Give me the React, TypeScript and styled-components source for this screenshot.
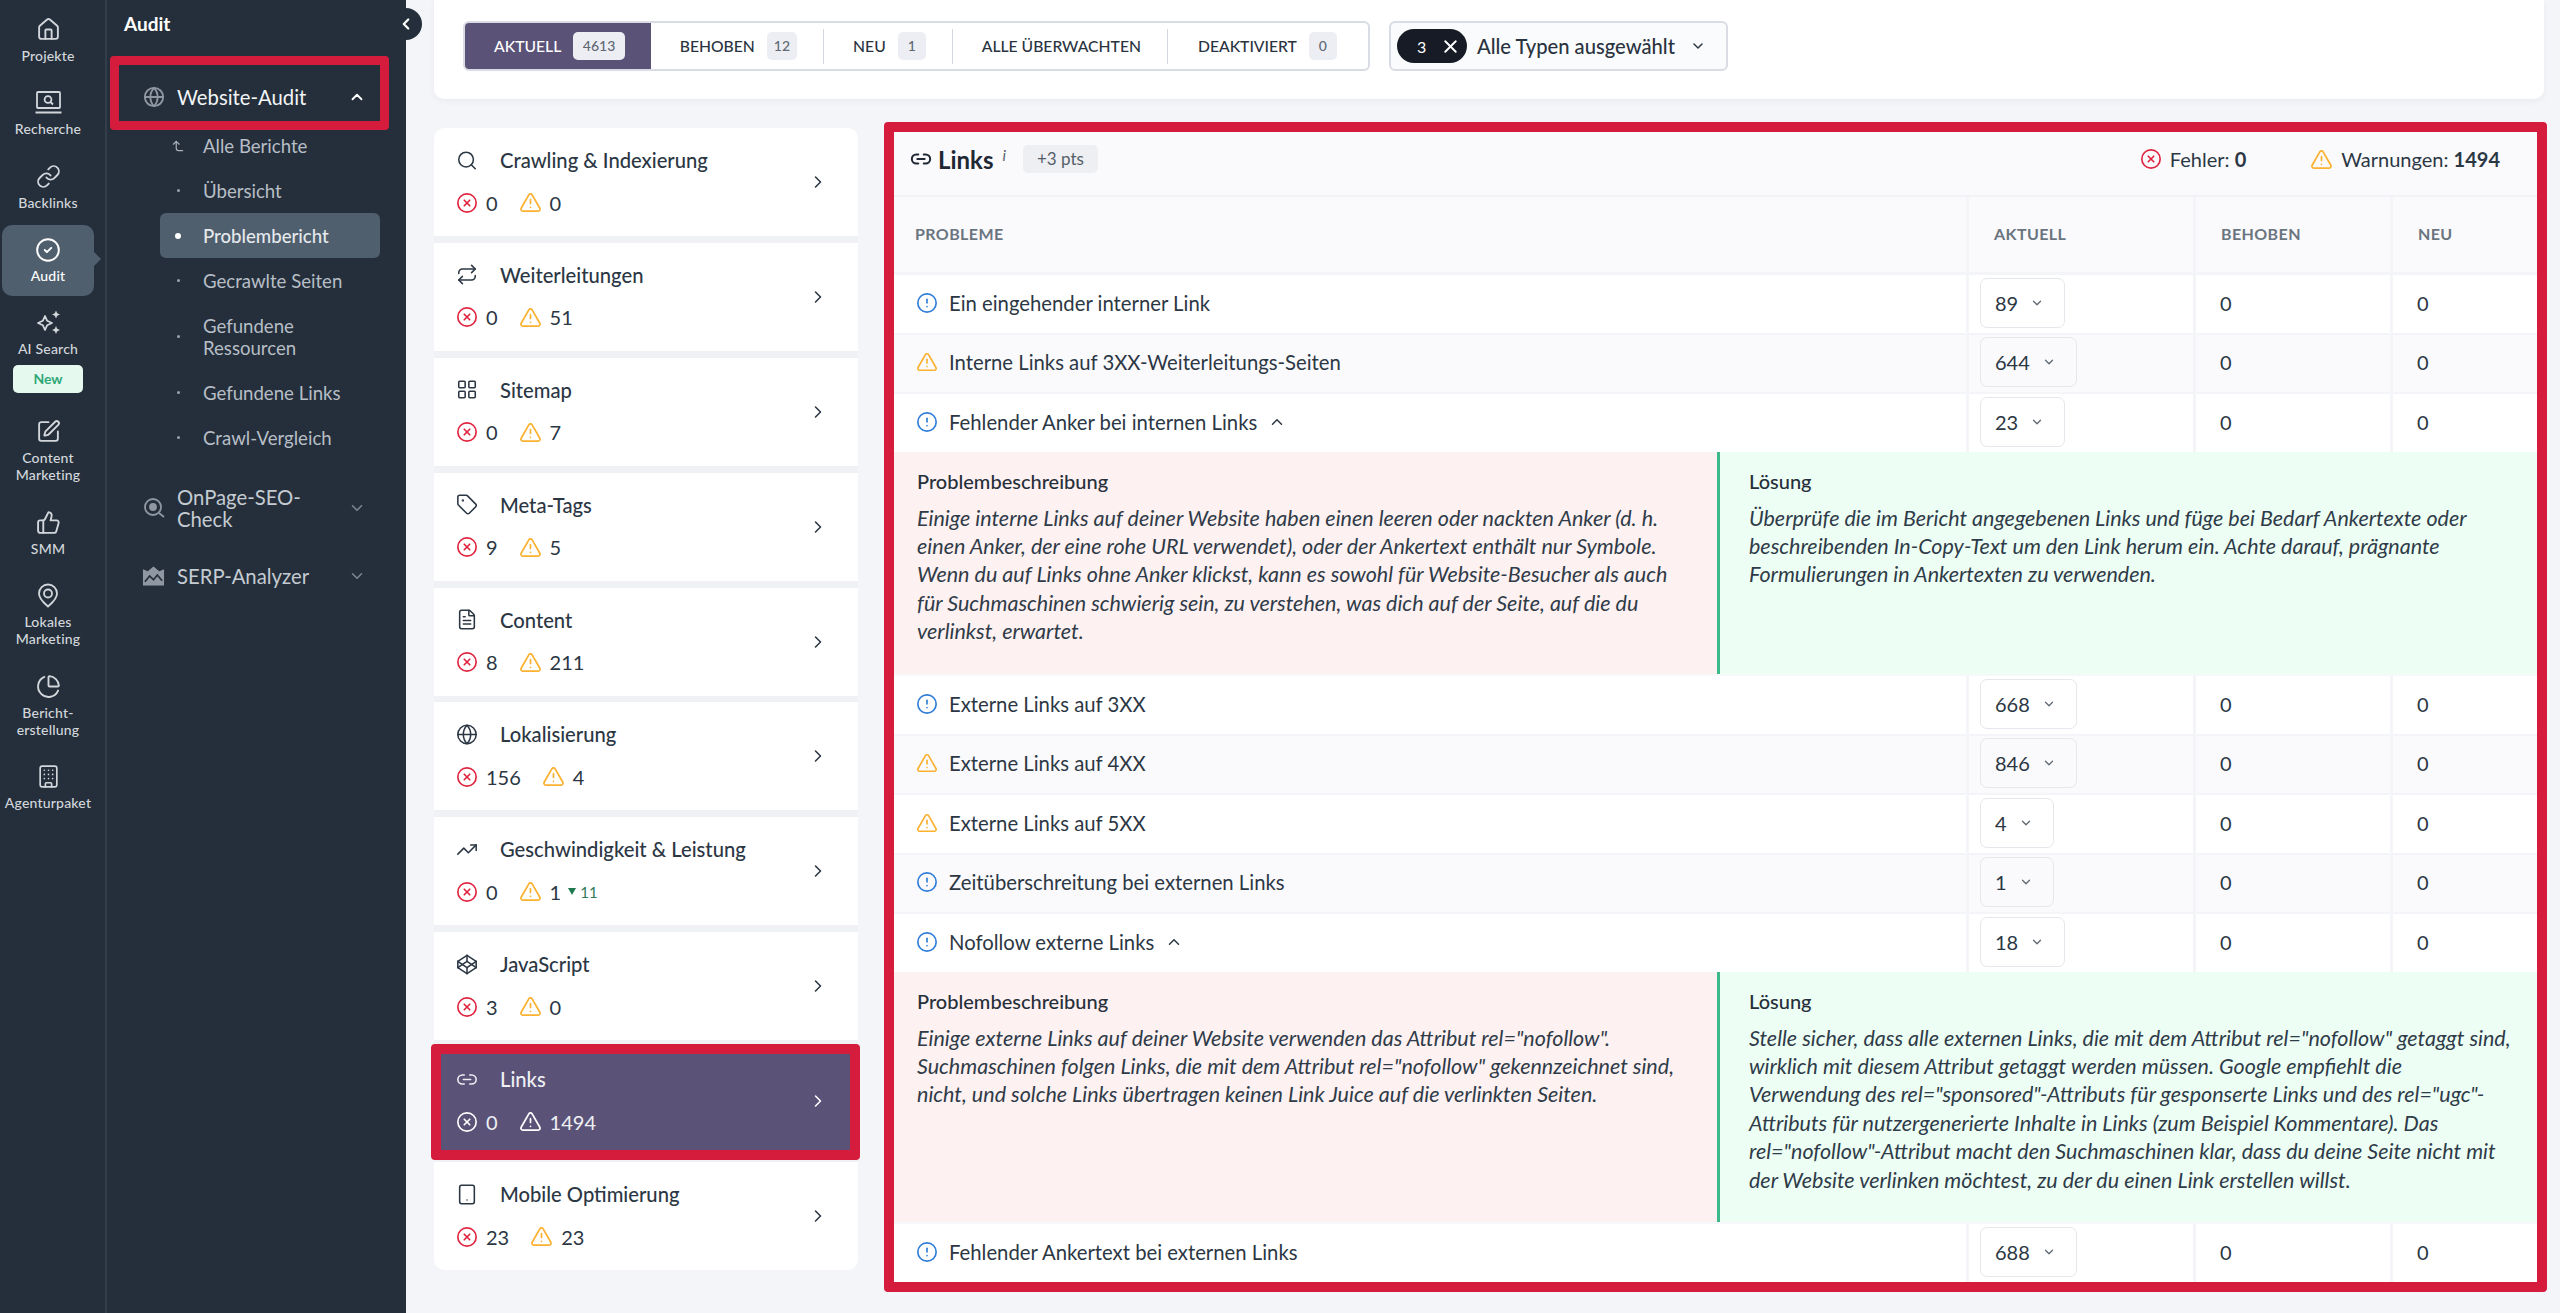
import React from 'react';
import styled, {createGlobalStyle} from 'styled-components';
import {
  Building,
  ChartPie,
  ChevronDown,
  ChevronLeft,
  ChevronRight,
  ChevronUp,
  CircleAlert,
  CircleCheck,
  CircleX,
  Codepen,
  CornerLeftUp,
  FileText,
  Globe,
  House,
  LayoutGrid,
  Link as LinkIcon,
  Link2,
  Repeat,
  Search,
  SquarePen,
  Tablet,
  Tag,
  ThumbsUp,
  TrendingUp,
  TriangleAlert,
  X
} from 'lucide-react';

const red = '#d61c3c';
const ink = '#2c3744';
const rail = '#242f3b';

const GlobalStyle = createGlobalStyle`
  html, body { margin: 0; padding: 0; height: 100%; }
  body { font-family: Lato, "Liberation Sans", sans-serif; background: #f3f5f9; color: ${ink}; }
  * { box-sizing: border-box; }
`;

const Page = styled.div`
  display: flex;
  height: 100vh;
  overflow: hidden;
`;

/* icon rail */
const Rail = styled.nav`
  width: 107px;
  flex: none;
  padding-top: 2px;
  background: ${rail};
  border-right: 2px solid #333e4b;
`;

const RailItem = styled.div<{$active?: boolean}>`
  position: relative;
  display: flex;
  flex-direction: column;
  align-items: center;
  width: 92px;
  margin-left: 2px;
  padding: 15px 0 12px;
  color: ${p => (p.$active ? '#ffffff' : '#d3d7dc')};
  ${p =>
    p.$active &&
    `
    background: #4f5f6e;
    border-radius: 10px;
    margin-top: 2px;
    padding: 13px 0 11.5px;
    &::after {
      content: '';
      position: absolute;
      right: -7px;
      top: 27px;
      border-left: 7px solid #4f5f6e;
      border-top: 7px solid transparent;
      border-bottom: 7px solid transparent;
    }
  `}
`;

const RailIconWrap = styled.div`
  height: 24px;
  display: flex;
  align-items: center;
  justify-content: center;
  margin-bottom: 5.5px;
`;

const RailLabel = styled.div`
  font-size: 14px;
  line-height: 17px;
  text-align: center;
  white-space: pre-line;
  font-weight: 500;
  letter-spacing: 0.2px;
`;

const NewBadge = styled.div`
  width: 70px;
  height: 28px;
  margin-top: 7.5px;
  border-radius: 5px;
  background: #e6f9ef;
  color: #2fa877;
  font-size: 14px;
  font-weight: 700;
  line-height: 28px;
  text-align: center;
`;

/* second column */
const SideNav = styled.aside`
  position: relative;
  width: 299px;
  flex: none;
  background: ${rail};
`;

const SideTitle = styled.div`
  height: 24px;
  margin: 12px 0 35px 17px;
  color: #fff;
  font-size: 19px;
  font-weight: 700;
  line-height: 24px;
`;

const CollapseButton = styled.div`
  position: absolute;
  top: 8px;
  right: -16px;
  z-index: 2;
  width: 32px;
  height: 32px;
  border-radius: 50%;
  background: ${rail};
  color: #fff;
  display: flex;
  align-items: center;
  justify-content: center;
`;

const NavRow = styled.div<{$framed?: boolean; $tall?: boolean; $spaced?: boolean}>`
  position: relative;
  display: flex;
  align-items: center;
  height: ${p => (p.$tall ? '54px' : '52.5px')};
  margin-top: ${p => (p.$spaced ? '15px' : '0')};
  padding: 0 40px 0 35px;
  color: ${p => (p.$framed ? '#f2f4f6' : '#c5cbd2')};
  ${p =>
    p.$framed &&
    `
    &::after {
      content: '';
      position: absolute;
      left: 3px;
      right: 17px;
      top: -15px;
      bottom: -6.5px;
      border: 9px solid ${red};
      border-radius: 4px;
    }
  `}
`;

const NavIcon = styled.div`
  width: 23px;
  margin-right: 12px;
  display: flex;
  justify-content: center;
  color: #8f98a2;
`;

const NavLabel = styled.div<{$wrap?: boolean}>`
  flex: 1;
  max-width: ${p => (p.$wrap ? '150px' : 'none')};
  font-size: 20.3px;
  line-height: 22px;
`;

const NavChevron = styled.div<{$dim?: boolean}>`
  margin-left: auto;
  display: flex;
  color: ${p => (p.$dim ? '#7e8792' : '#fff')};
`;

const SubList = styled.div`
  margin: -0.5px 0 20.5px 53px;
  width: 220px;
`;

const SubItem = styled.div<{$active?: boolean}>`
  display: flex;
  align-items: center;
  padding: 11.5px 0;
  border-radius: 6px;
  font-size: 18.6px;
  font-weight: ${p => (p.$active ? 500 : 400)};
  line-height: 22px;
  background: ${p => (p.$active ? '#4f5f6e' : 'transparent')};
  color: ${p => (p.$active ? '#e6e9ec' : '#b7bec6')};
`;

const SubMarker = styled.div`
  width: 36px;
  flex: none;
  margin-right: 7px;
  display: flex;
  justify-content: center;
`;

const Dot = styled.span<{$active?: boolean}>`
  width: ${p => (p.$active ? '6px' : '3px')};
  height: ${p => (p.$active ? '6px' : '3px')};
  border-radius: 50%;
  background: ${p => (p.$active ? '#fff' : '#9aa2ab')};
`;

const SubText = styled.div`
  width: 150px;
`;

/* main area */
const Main = styled.main`
  flex: 1;
  min-width: 0;
  padding-left: 28px;
  background: #f3f5f9;
`;

const FilterCard = styled.div`
  display: flex;
  align-items: flex-start;
  gap: 19px;
  height: 99px;
  width: 2110px;
  padding: 21px 0 0 29px;
  background: #fff;
  border-radius: 0 0 10px 10px;
  box-shadow: 0 2px 6px rgba(60, 70, 90, 0.06);
`;

const Segments = styled.div`
  display: flex;
  align-items: center;
  height: 50px;
  border: 2px solid #d9dce4;
  border-radius: 6px;
  overflow: hidden;
`;

const Segment = styled.div<{$active?: boolean}>`
  display: flex;
  align-items: center;
  gap: 12px;
  height: 100%;
  padding: 0 26px 0 29px;
  font-size: 15.7px;
  font-weight: 500;
  white-space: nowrap;
  color: ${p => (p.$active ? '#fff' : '#2a3340')};
  background: ${p => (p.$active ? '#5a5277' : 'transparent')};
  &:last-child {
    padding: 0 31px 0 30px;
  }
`;

const SegmentCount = styled.span<{$wide?: boolean}>`
  height: 28px;
  min-width: 28px;
  padding: 0 ${p => (p.$wide ? '9.5px' : '7px')};
  border-radius: 5px;
  background: #eceef3;
  color: #5f6873;
  font-size: 14px;
  line-height: 28px;
  text-align: center;
`;

const SegmentDivider = styled.span`
  width: 1px;
  height: 35px;
  background: #d3d7df;
`;

const TypeSelect = styled.div`
  display: flex;
  align-items: center;
  width: 339px;
  height: 50px;
  padding-left: 6px;
  background: #fafbfc;
  border: 2px solid #d9dce4;
  border-radius: 6px;
`;

const TypeChip = styled.div`
  display: flex;
  align-items: center;
  width: 70px;
  height: 34px;
  padding-left: 20px;
  gap: 14px;
  margin-right: 10px;
  border-radius: 17px;
  background: #161b25;
  color: #fff;
  font-size: 16px;
`;

const TypeLabel = styled.span`
  font-size: 20.2px;
  font-weight: 500;
  color: #2a3340;
  margin-right: 15px;
  white-space: nowrap;
`;

const Content = styled.div`
  display: flex;
  align-items: flex-start;
  margin-top: 23px;
`;

const CategoryList = styled.div`
  width: 424px;
  flex: none;
  margin: 6px 26px 0 0;
  display: flex;
  flex-direction: column;
  gap: 6.9px;
  background: #eff1f5;
  border-radius: 10px;
`;

const CategoryCard = styled.div<{$active?: boolean}>`
  position: relative;
  height: 108px;
  padding: 20px 0 0 22px;
  background: ${p => (p.$active ? '#5a5277' : '#fff')};
  color: ${p => (p.$active ? '#eef0f4' : ink)};
  &:first-child {
    border-radius: 10px 10px 0 0;
  }
  &:last-child {
    border-radius: 0 0 10px 10px;
  }
  ${p =>
    p.$active &&
    `
    &::after {
      content: '';
      position: absolute;
      top: -3px;
      left: -3px;
      right: -2px;
      bottom: -5px;
      border: 10px solid ${red};
      border-radius: 4px;
    }
  `}
`;

const CategoryHead = styled.div`
  display: flex;
  align-items: center;
  gap: 22px;
  height: 24px;
  font-size: 20.2px;
  font-weight: 500;
`;

const CategoryIcon = styled.div`
  width: 22px;
  display: flex;
  justify-content: center;
`;

const CategoryStats = styled.div`
  display: flex;
  align-items: center;
  height: 24px;
  margin-top: 18.5px;
  font-size: 20px;
`;

const StatNumber = styled.span`
  margin: 0 21px 0 8px;
`;

const Trend = styled.span`
  display: inline-flex;
  align-items: center;
  gap: 4px;
  margin-left: -14px;
  color: #2f7a56;
  font-size: 15px;
  &::before {
    content: '';
    border-top: 7px solid #1e7a4e;
    border-left: 4px solid transparent;
    border-right: 4px solid transparent;
  }
`;

const CategoryArrow = styled.div<{$active?: boolean}>`
  position: absolute;
  top: 44px;
  right: 30px;
  display: flex;
  color: ${p => (p.$active ? '#fff' : ink)};
`;

const ReportPanel = styled.section`
  width: 1663px;
  flex: none;
  border: 10px solid ${red};
  border-radius: 4px;
  background: #fff;
`;

const ReportHead = styled.header`
  display: flex;
  align-items: center;
  height: 65px;
  padding: 0 37px 9px 16px;
  background: #fafafc;
  border-bottom: 2px solid #f2f3f7;
  font-size: 20px;
`;

const ReportTitle = styled.h2`
  margin: 0 0 0 6px;
  font-size: 24px;
  font-weight: 700;
  color: #1f2833;
`;

const InfoMark = styled.i`
  margin: -8px 17px 0 9px;
  font-size: 15px;
  color: #555e68;
`;

const Points = styled.span`
  padding: 0 14px;
  height: 28px;
  border-radius: 5px;
  background: #eeeff3;
  color: #555e68;
  font-size: 17px;
  line-height: 28px;
`;

const Totals = styled.div`
  display: flex;
  align-items: center;
  gap: 8px;
  margin-left: auto;
  b {
    font-weight: 700;
  }
`;

const TotalsGap = styled.span`
  width: 48px;
`;

const TableRow = styled.div<{$head?: boolean; $grey?: boolean; $flush?: boolean}>`
  display: grid;
  grid-template-columns: 1072px 227px 197px 1fr;
  height: ${p => (p.$head ? '78px' : p.$flush ? '57.5px' : '59.5px')};
  background: ${p => (p.$head || p.$grey ? '#fafafc' : '#fff')};
  border-bottom: ${p => (p.$flush ? '0' : p.$head ? '3px' : '2px')} solid #f4f5f8;
`;

const Cell = styled.div`
  display: flex;
  align-items: center;
  padding: 0 0 2px 24px;
  font-size: 20px;
  border-left: 3px solid #f4f5f8;
`;

const HeadCell = styled(Cell)`
  padding-left: 25px;
  color: #6a7580;
  font-size: 16px;
  font-weight: 700;
  letter-spacing: 0.4px;
`;

const ProblemCell = styled.div`
  display: flex;
  align-items: center;
  gap: 11px;
  padding: 0 0 2px 22px;
  font-size: 20.3px;
  svg:first-child {
    width: 22px;
    height: 22px;
    flex: none;
  }
`;

const ProblemHead = styled(HeadCell)`
  padding-left: 21px;
  border-left: 0;
`;

const CountCell = styled(Cell)`
  padding-left: 11px;
`;

const CountSelect = styled.div`
  display: flex;
  align-items: center;
  gap: 12px;
  height: 50px;
  padding: 0 20px 0 14px;
  border: 1px solid #e5e7ec;
  border-radius: 7px;
  background: inherit;
`;

const Explain = styled.div`
  display: grid;
  grid-template-columns: 823px 1fr;
  border-bottom: 2px solid #f7f8fa;
`;

const ExplainSide = styled.div<{$fix?: boolean}>`
  padding: ${p => (p.$fix ? '16px 22px 28.5px 29px' : '16px 33px 28.5px 23px')};
  background: ${p => (p.$fix ? '#edfef4' : '#fdf1f1')};
  border-left: ${p => (p.$fix ? '3px solid #3cb88a' : '0')};
`;

const ExplainTitle = styled.div`
  font-size: 20px;
  font-weight: 500;
  line-height: 26px;
  color: #262f3a;
  margin-bottom: 10px;
`;

const ExplainText = styled.p`
  margin: 0;
  font-size: 21.5px;
  font-style: italic;
  line-height: 28.4px;
  color: #2f3b48;
`;

const ErrorIcon = ({color = '#e0243f'}: {color?: string}) => <CircleX size={22} color={color} strokeWidth={1.8} />;
const WarnIcon = ({color = '#fbb130'}: {color?: string}) => <TriangleAlert size={23} color={color} strokeWidth={1.8} />;
const InfoIcon = () => <CircleAlert size={22} color="#2f7dd8" strokeWidth={1.8} />;

function LaptopSearch() {
  return (
    <svg width="27" height="25" viewBox="0 0 27 25" fill="none" stroke="currentColor" strokeWidth="1.8">
      <rect x="2" y="2" width="23" height="16" rx="1" />
      <circle cx="13" cy="9.5" r="3.4" />
      <path d="M15.5 12l2.5 2.5M0.5 22.5h26" />
    </svg>
  );
}

function SparkIcon() {
  return (
    <svg width="27" height="25" viewBox="0 0 27 25" fill="none" stroke="currentColor" strokeWidth="1.8">
      <path d="M10 6l2.2 4.8L17 13l-4.8 2.2L10 20l-2.2-4.8L3 13l4.8-2.2z" strokeLinejoin="round" />
      <path d="M21 0.5l1.2 2.8L25 4.5l-2.8 1.2L21 8.5l-1.2-2.8L17 4.5l2.8-1.2z" fill="currentColor" strokeWidth="0" />
      <path d="M21 16l1.2 2.8 2.8 1.2-2.8 1.2L21 24l-1.2-2.8-2.8-1.2 2.8-1.2z" fill="currentColor" strokeWidth="0" />
    </svg>
  );
}

function PinIcon() {
  return (
    <svg width="24" height="25" viewBox="0 0 24 25" fill="none" stroke="currentColor" strokeWidth="1.8">
      <path d="M12 23.5c-2-2-9-7-9-13a9 9 0 0 1 18 0c0 6-7 11-9 13z" strokeLinejoin="round" />
      <circle cx="12" cy="10.5" r="4" />
    </svg>
  );
}

function EyeSearch() {
  return (
    <svg width="22" height="22" viewBox="0 0 22 22" fill="none" stroke="currentColor" strokeWidth="1.8">
      <circle cx="10" cy="10" r="8" />
      <circle cx="10" cy="10" r="3" fill="currentColor" />
      <path d="M16 16l5 4" />
    </svg>
  );
}

function SerpIcon() {
  return (
    <svg width="24" height="22" viewBox="0 0 24 22">
      <path d="M1 4l5 2 6-5 6 5 5-2v17H1z" fill="#8f98a2" />
      <path d="M3 17l5-6 4 4 4-5 5 6" fill="none" stroke={rail} strokeWidth="1.8" />
    </svg>
  );
}

const railItems: {label: string; icon: React.ReactNode; active?: boolean; badge?: string}[] = [
  {label: 'Projekte', icon: <House size={25} strokeWidth={1.8} />},
  {label: 'Recherche', icon: <LaptopSearch />},
  {label: 'Backlinks', icon: <LinkIcon size={25} strokeWidth={1.8} />},
  {label: 'Audit', icon: <CircleCheck size={26} strokeWidth={1.8} />, active: true},
  {label: 'AI Search', icon: <SparkIcon />, badge: 'New'},
  {label: 'Content\nMarketing', icon: <SquarePen size={25} strokeWidth={1.8} />},
  {label: 'SMM', icon: <ThumbsUp size={25} strokeWidth={1.8} />},
  {label: 'Lokales\nMarketing', icon: <PinIcon />},
  {label: 'Bericht-\nerstellung', icon: <ChartPie size={25} strokeWidth={1.8} />},
  {label: 'Agenturpaket', icon: <Building size={25} strokeWidth={1.6} />}
];

const subItems = ['Alle Berichte', 'Übersicht', 'Problembericht', 'Gecrawlte Seiten', 'Gefundene Ressourcen', 'Gefundene Links', 'Crawl-Vergleich'];

const tabs = [
  {label: 'AKTUELL', count: '4613', active: true},
  {label: 'BEHOBEN', count: '12'},
  {label: 'NEU', count: '1'},
  {label: 'ALLE ÜBERWACHTEN'},
  {label: 'DEAKTIVIERT', count: '0'}
];

const iconProps = {size: 23, strokeWidth: 1.7};

const categories: {title: string; icon: React.ReactNode; errors: number; warnings: number; trend?: string; active?: boolean}[] = [
  {title: 'Crawling & Indexierung', icon: <Search {...iconProps} />, errors: 0, warnings: 0},
  {title: 'Weiterleitungen', icon: <Repeat {...iconProps} />, errors: 0, warnings: 51},
  {title: 'Sitemap', icon: <LayoutGrid {...iconProps} />, errors: 0, warnings: 7},
  {title: 'Meta-Tags', icon: <Tag {...iconProps} />, errors: 9, warnings: 5},
  {title: 'Content', icon: <FileText {...iconProps} />, errors: 8, warnings: 211},
  {title: 'Lokalisierung', icon: <Globe {...iconProps} />, errors: 156, warnings: 4},
  {title: 'Geschwindigkeit & Leistung', icon: <TrendingUp {...iconProps} />, errors: 0, warnings: 1, trend: '11'},
  {title: 'JavaScript', icon: <Codepen {...iconProps} />, errors: 3, warnings: 0},
  {title: 'Links', icon: <Link2 {...iconProps} />, errors: 0, warnings: 1494, active: true},
  {title: 'Mobile Optimierung', icon: <Tablet {...iconProps} />, errors: 23, warnings: 23}
];

type Problem = {
  kind: 'info' | 'warn';
  title: string;
  count: string;
  grey?: boolean;
  problem?: string;
  solution?: string;
};

const problems: Problem[] = [
  {kind: 'info', title: 'Ein eingehender interner Link', count: '89'},
  {kind: 'warn', title: 'Interne Links auf 3XX-Weiterleitungs-Seiten', count: '644', grey: true},
  {
    kind: 'info',
    title: 'Fehlender Anker bei internen Links',
    count: '23',
    problem:
      'Einige interne Links auf deiner Website haben einen leeren oder nackten Anker (d. h. einen Anker, der eine rohe URL verwendet), oder der Ankertext enthält nur Symbole. Wenn du auf Links ohne Anker klickst, kann es sowohl für Website-Besucher als auch für Suchmaschinen schwierig sein, zu verstehen, was dich auf der Seite, auf die du verlinkst, erwartet.',
    solution:
      'Überprüfe die im Bericht angegebenen Links und füge bei Bedarf Ankertexte oder beschreibenden In-Copy-Text um den Link herum ein. Achte darauf, prägnante Formulierungen in Ankertexten zu verwenden.'
  },
  {kind: 'info', title: 'Externe Links auf 3XX', count: '668'},
  {kind: 'warn', title: 'Externe Links auf 4XX', count: '846', grey: true},
  {kind: 'warn', title: 'Externe Links auf 5XX', count: '4'},
  {kind: 'info', title: 'Zeitüberschreitung bei externen Links', count: '1', grey: true},
  {
    kind: 'info',
    title: 'Nofollow externe Links',
    count: '18',
    problem:
      'Einige externe Links auf deiner Website verwenden das Attribut rel="nofollow". Suchmaschinen folgen Links, die mit dem Attribut rel="nofollow" gekennzeichnet sind, nicht, und solche Links übertragen keinen Link Juice auf die verlinkten Seiten.',
    solution:
      'Stelle sicher, dass alle externen Links, die mit dem Attribut rel="nofollow" getaggt sind, wirklich mit diesem Attribut getaggt werden müssen. Google empfiehlt die Verwendung des rel="sponsored"-Attributs für gesponserte Links und des rel="ugc"-Attributs für nutzergenerierte Inhalte in Links (zum Beispiel Kommentare). Das rel="nofollow"-Attribut macht den Suchmaschinen klar, dass du deine Seite nicht mit der Website verlinken möchtest, zu der du einen Link erstellen willst.'
  },
  {kind: 'info', title: 'Fehlender Ankertext bei externen Links', count: '688'}
];

function App() {
  return (
    <Page>
      <GlobalStyle />
      <Rail>
        {railItems.map(item => (
          <RailItem key={item.label} $active={item.active}>
            <RailIconWrap>{item.icon}</RailIconWrap>
            <RailLabel>{item.label}</RailLabel>
            {item.badge && <NewBadge>{item.badge}</NewBadge>}
          </RailItem>
        ))}
      </Rail>

      <SideNav>
        <CollapseButton>
          <ChevronLeft size={18} strokeWidth={3} />
        </CollapseButton>
        <SideTitle>Audit</SideTitle>
        <NavRow $framed>
          <NavIcon>
            <Globe size={22} strokeWidth={2} />
          </NavIcon>
          <NavLabel>Website-Audit</NavLabel>
          <NavChevron>
            <ChevronUp size={18} strokeWidth={2.4} />
          </NavChevron>
        </NavRow>
        <SubList>
          {subItems.map((label, i) => (
            <SubItem key={label} $active={i === 2}>
              <SubMarker>
                {i === 0 ? <CornerLeftUp size={14} color="#aab1b9" /> : <Dot $active={i === 2} />}
              </SubMarker>
              <SubText>{label}</SubText>
            </SubItem>
          ))}
        </SubList>
        <NavRow $tall>
          <NavIcon>
            <EyeSearch />
          </NavIcon>
          <NavLabel $wrap>OnPage-SEO-Check</NavLabel>
          <NavChevron $dim>
            <ChevronDown size={18} strokeWidth={2} />
          </NavChevron>
        </NavRow>
        <NavRow $spaced>
          <NavIcon>
            <SerpIcon />
          </NavIcon>
          <NavLabel>SERP-Analyzer</NavLabel>
          <NavChevron $dim>
            <ChevronDown size={18} strokeWidth={2} />
          </NavChevron>
        </NavRow>
      </SideNav>

      <Main>
        <FilterCard>
          <Segments>
            {tabs.map((tab, i) => (
              <React.Fragment key={tab.label}>
                {i > 1 && <SegmentDivider />}
                <Segment $active={tab.active}>
                  {tab.label}
                  {tab.count && <SegmentCount $wide={tab.active}>{tab.count}</SegmentCount>}
                </Segment>
              </React.Fragment>
            ))}
          </Segments>
          <TypeSelect>
            <TypeChip>
              3 <X size={21} strokeWidth={2.2} />
            </TypeChip>
            <TypeLabel>Alle Typen ausgewählt</TypeLabel>
            <ChevronDown size={16} strokeWidth={2.2} />
          </TypeSelect>
        </FilterCard>

        <Content>
          <CategoryList>
            {categories.map(cat => (
              <CategoryCard key={cat.title} $active={cat.active}>
                <CategoryHead>
                  <CategoryIcon>{cat.icon}</CategoryIcon>
                  {cat.title}
                </CategoryHead>
                <CategoryStats>
                  <ErrorIcon color={cat.active ? '#fff' : undefined} />
                  <StatNumber>{cat.errors}</StatNumber>
                  <WarnIcon color={cat.active ? '#fff' : undefined} />
                  <StatNumber>{cat.warnings}</StatNumber>
                  {cat.trend && <Trend>{cat.trend}</Trend>}
                </CategoryStats>
                <CategoryArrow $active={cat.active}>
                  <ChevronRight size={20} strokeWidth={1.9} />
                </CategoryArrow>
              </CategoryCard>
            ))}
          </CategoryList>

          <ReportPanel>
            <ReportHead>
              <Link2 size={22} strokeWidth={2.2} color="#1f2833" />
              <ReportTitle>Links</ReportTitle>
              <InfoMark>i</InfoMark>
              <Points>+3 pts</Points>
              <Totals>
                <ErrorIcon />
                <span>
                  Fehler: <b>0</b>
                </span>
                <TotalsGap />
                <WarnIcon />
                <span>
                  Warnungen: <b>1494</b>
                </span>
              </Totals>
            </ReportHead>
            <TableRow $head>
              <ProblemHead>PROBLEME</ProblemHead>
              <HeadCell>AKTUELL</HeadCell>
              <HeadCell>BEHOBEN</HeadCell>
              <HeadCell>NEU</HeadCell>
            </TableRow>
            {problems.map((row, i) => (
              <React.Fragment key={row.title}>
                <TableRow $grey={row.grey} $flush={!!row.problem || i === problems.length - 1}>
                  <ProblemCell>
                    {row.kind === 'info' ? <InfoIcon /> : <WarnIcon />}
                    {row.title}
                    {row.problem && <ChevronUp size={18} strokeWidth={2} />}
                  </ProblemCell>
                  <CountCell>
                    <CountSelect>
                      {row.count}
                      <ChevronDown size={14} strokeWidth={2.2} color="#5f6873" />
                    </CountSelect>
                  </CountCell>
                  <Cell>0</Cell>
                  <Cell>0</Cell>
                </TableRow>
                {row.problem && (
                  <Explain>
                    <ExplainSide>
                      <ExplainTitle>Problembeschreibung</ExplainTitle>
                      <ExplainText>{row.problem}</ExplainText>
                    </ExplainSide>
                    <ExplainSide $fix>
                      <ExplainTitle>Lösung</ExplainTitle>
                      <ExplainText>{row.solution}</ExplainText>
                    </ExplainSide>
                  </Explain>
                )}
              </React.Fragment>
            ))}
          </ReportPanel>
        </Content>
      </Main>
    </Page>
  );
}

export default App;
